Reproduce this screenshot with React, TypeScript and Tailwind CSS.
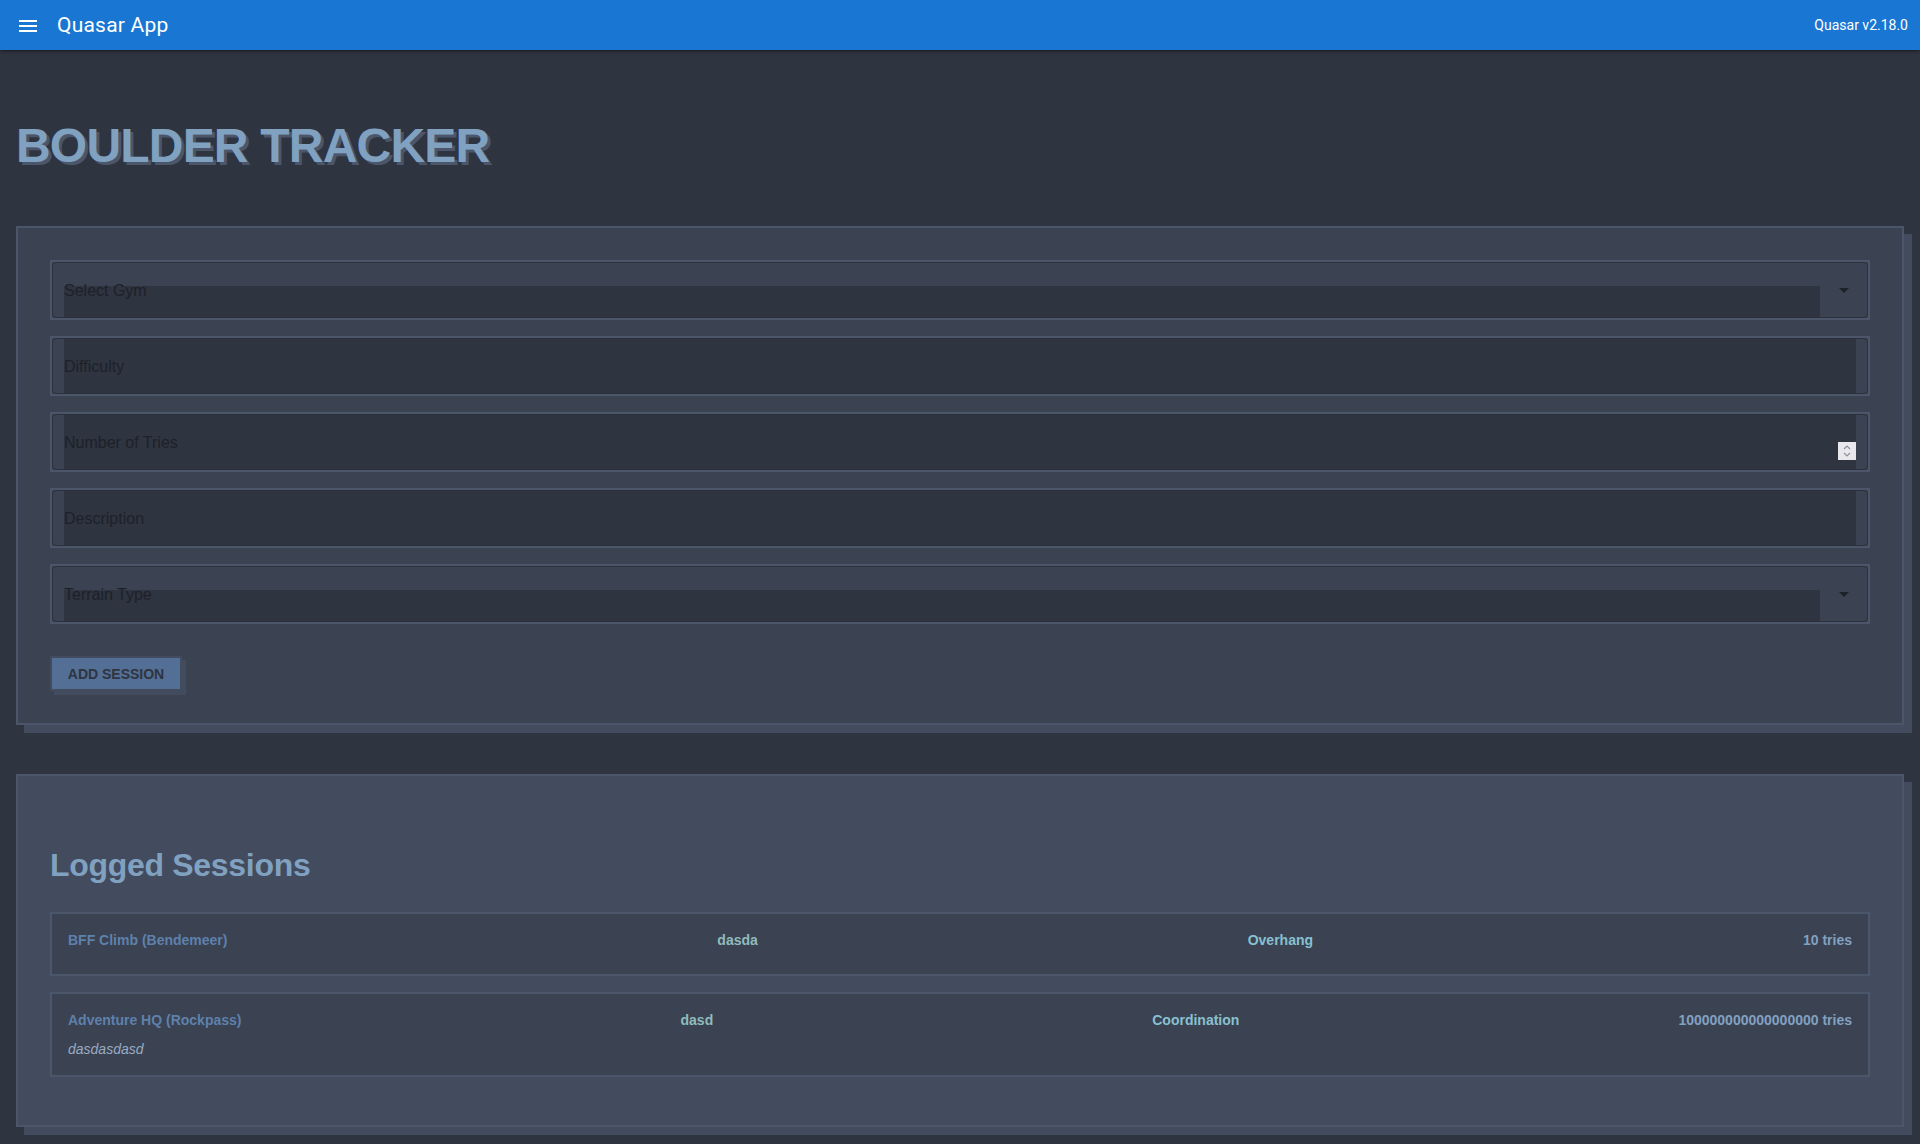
import React from "react";

function MenuIcon() {
  return (
    <svg width="24" height="24" viewBox="0 0 24 24" fill="#ffffff">
      <path d="M3 18h18v-2H3v2zm0-5h18v-2H3v2zm0-7v2h18V6H3z" />
    </svg>
  );
}

function Arrow() {
  return (
    <svg width="10" height="5" viewBox="0 0 10 5">
      <path d="M0 0 L10 0 L5 5 Z" fill="#1d2129" />
    </svg>
  );
}

function Spinner() {
  return (
    <div className="absolute right-0 top-[27px] flex h-[18px] w-[18px] flex-col items-center justify-center gap-[2px] bg-[#e9e9ed]">
      <svg width="8" height="5" viewBox="0 0 8 5">
        <path d="M1 4 L4 1 L7 4" fill="none" stroke="#8f8f9d" strokeWidth="1.2" />
      </svg>
      <svg width="8" height="5" viewBox="0 0 8 5">
        <path d="M1 1 L4 4 L7 1" fill="none" stroke="#8f8f9d" strokeWidth="1.2" />
      </svg>
    </div>
  );
}

function InputField({ label, number }: { label: string; number?: boolean }) {
  return (
    <div className="h-[60px] border-2 border-[#4c566a]">
      <div className="flex h-full rounded-[4px] border border-[#2b303b] bg-[#3b4252] px-[11px]">
        <div className="relative flex flex-1 items-center bg-[#2e3440] pt-[2px]">
          <span className="text-[16px] text-[#1d2129]">{label}</span>
          {number && <Spinner />}
        </div>
      </div>
    </div>
  );
}

function SelectField({ label }: { label: string }) {
  return (
    <div className="h-[60px] border-2 border-[#4c566a]">
      <div className="relative flex h-full rounded-[4px] border border-[#2b303b] bg-[#3b4252] px-[11px]">
        <div className="flex flex-1 flex-col">
          <div className="h-[23px]" />
          <div className="flex-1 bg-[#2e3440]" />
        </div>
        <div className="flex w-[36px] items-center justify-end pr-[7px]">
          <Arrow />
        </div>
        <span className="absolute left-[11px] top-[18px] text-[16px] leading-[20px] text-[#1d2129]">
          {label}
        </span>
      </div>
    </div>
  );
}

type Session = {
  gym: string;
  grade: string;
  terrain: string;
  tries: string;
  desc?: string;
};

const sessions: Session[] = [
  { gym: "BFF Climb (Bendemeer)", grade: "dasda", terrain: "Overhang", tries: "10 tries" },
  {
    gym: "Adventure HQ (Rockpass)",
    grade: "dasd",
    terrain: "Coordination",
    tries: "100000000000000000 tries",
    desc: "dasdasdasd",
  },
];

function SessionItem({ s }: { s: Session }) {
  return (
    <div className="mb-4 border-2 border-[#4c566a] bg-[#3b4252] p-4">
      <div className="mb-2 flex justify-between text-[14px] font-bold leading-[20px]">
        <span className="text-[#5e81ac]">{s.gym}</span>
        <span className="text-[#8fbcbb]">{s.grade}</span>
        <span className="text-[#88c0d0]">{s.terrain}</span>
        <span className="text-[#81a1c1]">{s.tries}</span>
      </div>
      {s.desc && (
        <div className="pt-[1px] text-[14px] italic leading-[20px] text-[#9aabc2]">{s.desc}</div>
      )}
    </div>
  );
}

export default function App() {
  return (
    <div
      className="min-h-screen bg-[#2e3440]"
      style={{ fontFamily: '"Liberation Sans", Arial, sans-serif' }}
    >
      <header
        className="relative z-10 flex h-[50px] items-center bg-[#1976d2] px-3 pt-[1px] text-white shadow-[0_1px_5px_rgba(0,0,0,0.2),0_2px_2px_rgba(0,0,0,0.14),0_3px_1px_-2px_rgba(0,0,0,0.12)]"
        style={{ fontFamily: 'Roboto, "Liberation Sans", sans-serif' }}
      >
        <div className="flex h-8 w-8 items-center justify-center">
          <MenuIcon />
        </div>
        <div className="flex-1 pl-[13px] pr-3 text-[21px] tracking-[0.01em]">Quasar App</div>
        <div className="text-[14px]">Quasar v2.18.0</div>
      </header>

      <main className="px-4 pb-[9px]">
        <h1 className="pt-[72px] text-[48px] font-bold leading-none tracking-[-0.8px] text-[#81a1c1] [text-shadow:3px_3px_0_#4c566a]">
          BOULDER TRACKER
        </h1>

        <section className="mt-[56px] border-2 border-[#4c566a] bg-[#3b4252] p-8 shadow-[8px_8px_0_0_#434c5e]">
          <div className="flex flex-col gap-4">
            <SelectField label="Select Gym" />
            <InputField label="Difficulty" />
            <InputField label="Number of Tries" number />
            <InputField label="Description" />
            <SelectField label="Terrain Type" />
          </div>
          <button className="mt-[32px] flex h-[35px] w-[132px] items-center justify-center border-2 border-[#434c5e] bg-[#546f95] pt-[1px] text-[14px] font-bold text-[#2e3440] shadow-[4px_4px_0_0_#434c5e]">
            ADD SESSION
          </button>
        </section>

        <section className="mt-[49px] border-2 border-[#4c566a] bg-[#434c5e] px-8 pb-4 pt-8 shadow-[8px_8px_0_0_#434c5e]">
          <h2 className="mb-[31px] mt-[41px] text-[32px] font-bold leading-none tracking-[-0.3px] text-[#81a1c1]">
            Logged Sessions
          </h2>
          {sessions.map((s) => (
            <SessionItem key={s.gym} s={s} />
          ))}
          <div className="h-4" />
        </section>
      </main>
    </div>
  );
}
